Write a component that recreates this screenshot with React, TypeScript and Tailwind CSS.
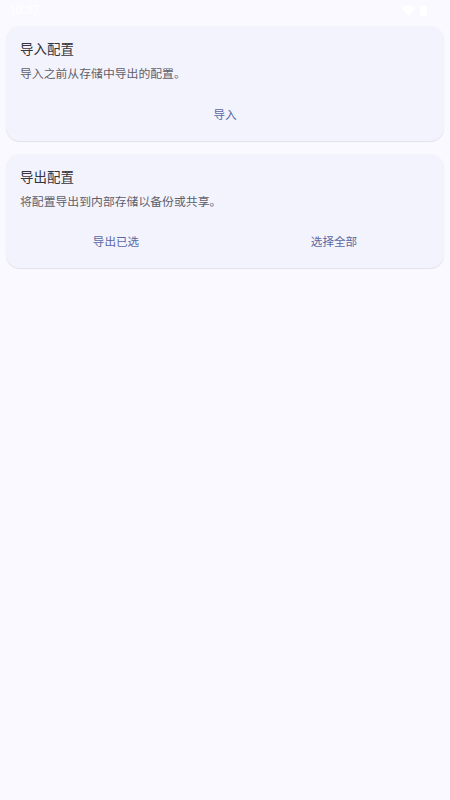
import React from "react"

const cjk = "font-['Roboto','Noto_Sans_CJK_SC',sans-serif]"

const Card = ({ title, description, actions }: { title: string; description: string; actions: string[] }) => {
  return (
    <section className="h-[114.6px] rounded-[14px] bg-[#f3f3fd] shadow-[0_1px_1px_rgba(60,60,90,0.12)] px-[14px] pt-[14px]">
      <h2 className="text-[13.5px] leading-[18px] text-[#33343b]">{title}</h2>
      <p className="mt-[8px] text-[11.85px] leading-[16px] text-[#5e5f69]">{description}</p>
      <div className="flex -mx-[13px] mt-[24.7px]">
        {actions.map(action => (
          <button key={action} className="flex-1 text-[11.6px] leading-[16px] text-[#5a68a3]">
            {action}
          </button>
        ))}
      </div>
    </section>
  )
}

export default function App() {
  return (
    <div className={`${cjk} relative w-[450px] h-[800px] bg-[#faf9ff] overflow-hidden`}>
      <header className="h-[26px] pl-[9px] pr-[23px] flex items-start justify-between pt-[2px] text-white">
        <span className="text-[12px] leading-[16px] font-medium">10:37</span>
        <div className="flex items-center gap-[5px] mt-[3px]">
          <svg width="13" height="11" viewBox="0 0 13 11" fill="white">
            <path d="M0 3.2 C3.6 -0.6 9.4 -0.6 13 3.2 L6.5 11 Z" />
          </svg>
          <svg width="7" height="11" viewBox="0 0 7 11" fill="white">
            <path d="M2.4 0 H4.6 V1 H7 V11 H0 V1 H2.4 Z" />
          </svg>
        </div>
      </header>
      <main className="flex flex-col gap-[13.2px] px-[6px]">
        <Card title="导入配置" description="导入之前从存储中导出的配置。" actions={["导入"]} />
        <Card title="导出配置" description="将配置导出到内部存储以备份或共享。" actions={["导出已选", "选择全部"]} />
      </main>
    </div>
  )
}
